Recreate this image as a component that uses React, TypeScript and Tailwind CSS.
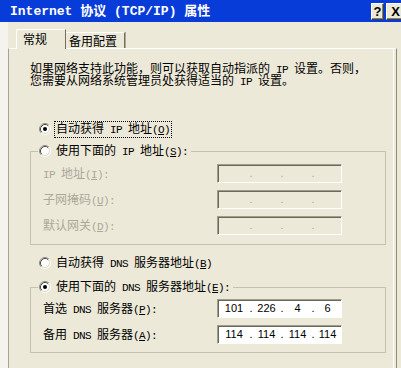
import React from "react";

// ASCII runs get a narrow monospace face so widths follow the SimSun look.
// "&X" inside an ASCII run marks an underlined access key.
const Txt = ({ s, mono = "text-[11px] tracking-[-0.6px]" }: { s: string; mono?: string }) => {
  const parts = s.split(/([ -~]+)/).filter(Boolean);
  return (
    <>
      {parts.map((p, i) =>
        /^[ -~]+$/.test(p) ? (
          <span key={i} className={"whitespace-pre font-['Liberation_Mono',monospace] " + mono}>
            {p.split(/&(.)/).map((q, j) => (j % 2 ? <u key={j}>{q}</u> : q))}
          </span>
        ) : (
          <span key={i}>{p}</span>
        )
      )}
    </>
  );
};

const Radio = ({ checked }: { checked?: boolean }) => (
  <svg width="12" height="12" viewBox="0 0 12 12" className="shrink-0">
    <circle cx="6" cy="6" r="4.5" fill="#fff" />
    <path d="M2.11 9.89 A5.5 5.5 0 0 1 9.89 2.11" fill="none" stroke="#8e8c80" />
    <path d="M2.82 9.18 A4.5 4.5 0 0 1 9.18 2.82" fill="none" stroke="#4a4a44" />
    <path d="M9.89 2.11 A5.5 5.5 0 0 1 2.11 9.89" fill="none" stroke="#ffffff" />
    <path d="M9.18 2.82 A4.5 4.5 0 0 1 2.82 9.18" fill="none" stroke="#dcd9cc" />
    {checked && <circle cx="6" cy="6" r="2" fill="#000" />}
  </svg>
);

const RadioRow = ({ label, checked, focus }: { label: string; checked?: boolean; focus?: boolean }) => (
  <div className="flex items-center h-[16px]">
    <Radio checked={checked} />
    <span
      className={
        focus
          ? "ml-[4px] px-[1px] h-[15px] flex items-center outline-1 outline-dotted outline-black"
          : "ml-[4px] px-[1px] h-[15px] flex items-center"
      }
    >
      <span className="whitespace-nowrap">
        <Txt s={label} />
      </span>
    </span>
  </div>
);

const IpField = ({ octets, disabled }: { octets: string[]; disabled?: boolean }) => {
  const dot = disabled ? "text-[#aca899]" : "text-black";
  return (
    <div
      className={
        "w-[125px] h-[19px] flex items-center pl-[1px] border border-t-[#a09d8d] border-l-[#a09d8d] border-r-white border-b-white shadow-[inset_1px_1px_0_#6b695c] font-['Liberation_Sans',Arial,sans-serif] text-[11px] leading-none " +
        (disabled ? "bg-[#ece9d8]" : "bg-white")
      }
    >
      <span className="w-[30px] text-center">{octets[0]}</span>
      <span className={"w-[4px] text-center " + dot}>.</span>
      <span className="w-[27px] text-center">{octets[1]}</span>
      <span className={"w-[4px] text-center " + dot}>.</span>
      <span className="w-[27px] text-center">{octets[2]}</span>
      <span className={"w-[4px] text-center " + dot}>.</span>
      <span className="w-[25px] text-center">{octets[3]}</span>
    </div>
  );
};

const Label = ({ s }: { s: string }) => (
  <div className="h-[19px] flex items-center whitespace-nowrap">
    <span>
      <Txt s={s} />
    </span>
  </div>
);

const TitleBtn = ({ children, wide }: { children: React.ReactNode; wide?: boolean }) => (
  <div
    className={
      "h-[17px] bg-[#ece9d8] border border-t-white border-l-white border-r-[#404040] border-b-[#404040] shadow-[inset_-1px_-1px_0_#808080] flex items-center justify-center text-[13px] font-bold leading-none text-black font-['Liberation_Sans',Arial,sans-serif] " +
      (wide ? "w-[19px]" : "w-[13px]")
    }
  >
    {children}
  </div>
);

export default function App() {
  return (
    <div className="w-[401px] h-[368px] overflow-hidden bg-[#ece9d8] text-black font-['Noto_Sans_CJK_SC',sans-serif] text-[12px] leading-[12px]">
      {/* title bar */}
      <div className="h-[22px] bg-[#083cd8] flex pl-[10px]">
        <span className="self-center text-white font-bold text-[13px] leading-[14px] whitespace-nowrap">
          <Txt s="Internet 协议 (TCP/IP) 属性" mono="text-[13px]" />
        </span>
        <div className="ml-auto mt-[3px] -mr-[4px] flex gap-[2px]">
          <TitleBtn>?</TitleBtn>
          <TitleBtn wide>X</TitleBtn>
        </div>
      </div>

      <div className="flex">
        <div className="w-[8px] shrink-0 bg-[#f4f3ee]" />
        <div className="w-[389px] shrink-0">
          {/* tabs */}
          <div className="h-[26px] flex items-end pl-[8px]">
            <div className="relative z-10 -mb-px h-[20px] w-[50px] bg-[#ece9d8] border-t border-l border-r border-t-white border-l-white border-r-[#716f64] pl-[6px] pt-[3px]">
              常规
            </div>
            <div className="h-[16px] w-[59px] border-t border-r border-t-white border-r-[#716f64] shadow-[1px_0_0_#aca899] pl-[3px] pt-[2px]">
              备用配置
            </div>
          </div>

          {/* panel */}
          <div className="h-[330px] flex flex-col items-start border-t border-l border-r border-t-white border-l-[#a5a396] border-r-[#8e8c80] shadow-[inset_-2px_0_0_#ece9d8,inset_-3px_0_0_#fff] pt-[13px] pl-[21px]">
            <div className="h-[12px] whitespace-nowrap">
              <Txt s="如果网络支持此功能，则可以获取自动指派的 IP 设置。否则，" />
            </div>
            <div className="h-[12px] whitespace-nowrap">
              <Txt s="您需要从网络系统管理员处获得适当的 IP 设置。" />
            </div>

            <div className="mt-[35px] pl-[9px]">
              <RadioRow label="自动获得 IP 地址(&O)" checked focus />
            </div>

            <fieldset className="mt-[6px] w-[356px] border border-[#c4c1b1] p-0 m-0">
              <legend className="ml-[7px] pr-[2px] pl-[1px]">
                <RadioRow label="使用下面的 IP 地址(&S):" />
              </legend>
              <div className="pl-[12px] pt-[5px] pb-[9px] grid grid-cols-[174px_125px] gap-y-[7px] items-center text-[#aca899]">
                <Label s="IP 地址(&I):" />
                <IpField octets={["", "", "", ""]} disabled />
                <Label s="子网掩码(&U):" />
                <IpField octets={["", "", "", ""]} disabled />
                <Label s="默认网关(&D):" />
                <IpField octets={["", "", "", ""]} disabled />
              </div>
            </fieldset>

            <div className="mt-[10px] pl-[9px]">
              <RadioRow label="自动获得 DNS 服务器地址(&B)" />
            </div>

            <fieldset className="mt-[8px] w-[356px] border border-[#c4c1b1] p-0 m-0">
              <legend className="ml-[7px] pr-[2px] pl-[1px]">
                <RadioRow label="使用下面的 DNS 服务器地址(&E):" checked />
              </legend>
              <div className="pl-[12px] pt-[4px] pb-[8px] grid grid-cols-[174px_125px] gap-y-[7px] items-center">
                <Label s="首选 DNS 服务器(&P):" />
                <IpField octets={["101", "226", "4", "6"]} />
                <Label s="备用 DNS 服务器(&A):" />
                <IpField octets={["114", "114", "114", "114"]} />
              </div>
            </fieldset>
          </div>
        </div>
      </div>
    </div>
  );
}
